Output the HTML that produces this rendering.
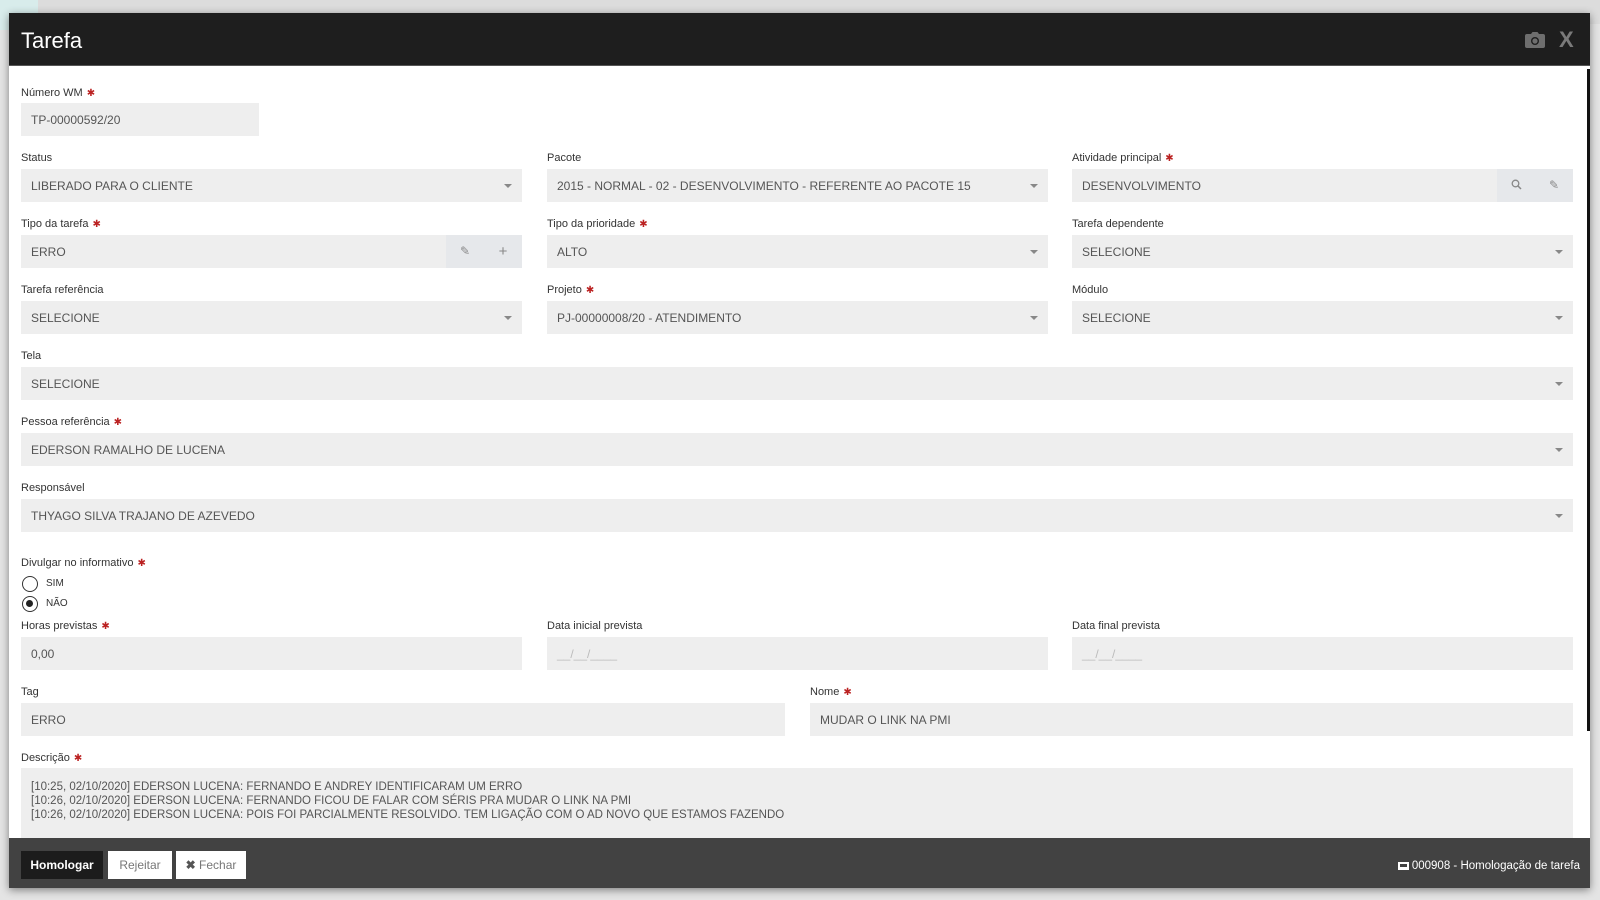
<!DOCTYPE html>
<html><head><meta charset="utf-8"><style>
*{box-sizing:border-box;margin:0;padding:0}
body{width:1600px;height:900px;overflow:hidden;background:#e4e4e4;font-family:"Liberation Sans",sans-serif;position:relative}
.bgtop{position:absolute;left:0;top:0;width:1600px;height:24px;background:#dcdcdc}
.teal{position:absolute;left:0;top:0;width:38px;height:30px;background:#d8eceb}
.modal{position:absolute;left:9px;top:13px;width:1581px;height:875px;background:#fff;box-shadow:0 2px 8px rgba(0,0,0,.45)}
.hdr{position:absolute;left:0;top:0;width:1581px;height:53px;background:#1e1e1e;border-bottom:1px solid #555}
.hdr h1{position:absolute;left:12px;top:15px;color:#fff;font-size:22px;font-weight:normal}
.lbl{position:absolute;font-size:11px;color:#333;font-weight:normal;margin-top:2px}
.lbl i{color:#b22;font-style:normal;font-size:10px;margin-left:4px}
.in{position:absolute;height:33px;background:#eeeeee;font-size:12px;color:#555;padding:10px 10px;white-space:nowrap}
.in.sel:after{content:"";position:absolute;right:10px;top:15px;border:4px solid transparent;border-top:4px solid #888;border-bottom:0}
.addon{position:absolute;top:0;height:33px;width:38px;background:#e6e8eb;color:#888;text-align:center;line-height:33px;font-size:12px}
.ftr{position:absolute;left:0;top:825px;width:1581px;height:50px;background:#424242}
.btn{position:absolute;top:13px;height:28px;font-size:12px;line-height:28px;text-align:center}
.radio{position:absolute;width:16px;height:16px;border:1.5px solid #333;border-radius:50%}
.scroll{position:absolute;left:1578px;top:56px;width:3px;height:662px;background:#111}
</style></head><body>
<div class="bgtop"></div><div class="teal"></div>
<div class="modal">
<div class="hdr"><h1>Tarefa</h1>
<svg style="position:absolute;left:1516px;top:19px" width="20" height="16" viewBox="0 0 20 16"><path d="M6 2l1.5-2h5L14 2h4a2 2 0 0 1 2 2v10a2 2 0 0 1-2 2H2a2 2 0 0 1-2-2V4a2 2 0 0 1 2-2z" fill="#6e6e6e"/><circle cx="10" cy="9" r="4" fill="#1e1e1e"/><circle cx="10" cy="9" r="2.6" fill="#6e6e6e"/></svg>
<div style="position:absolute;left:1550px;top:14px;color:#7a7a7a;font-size:22px;font-weight:bold">X</div>
</div>
<div class="scroll"></div>

<div class="lbl" style="left:12px;top:72px">Número WM<i>✱</i></div>
<div class="in" style="left:12px;top:90px;width:238px">TP-00000592/20</div>

<div class="lbl" style="left:12px;top:137px">Status</div>
<div class="in sel" style="left:12px;top:156px;width:501px">LIBERADO PARA O CLIENTE</div>
<div class="lbl" style="left:538px;top:137px">Pacote</div>
<div class="in sel" style="left:538px;top:156px;width:501px">2015 - NORMAL - 02 - DESENVOLVIMENTO - REFERENTE AO PACOTE 15</div>
<div class="lbl" style="left:1063px;top:137px">Atividade principal<i>✱</i></div>
<div class="in" style="left:1063px;top:156px;width:501px">DESENVOLVIMENTO
<div class="addon" style="right:38px"><svg width="11" height="11" viewBox="0 0 11 11" style="vertical-align:-1px"><circle cx="4.5" cy="4.5" r="3.3" fill="none" stroke="#888" stroke-width="1.3"/><path d="M7 7l3 3" stroke="#888" stroke-width="1.5"/></svg></div><div class="addon" style="right:0">&#9998;</div></div>

<div class="lbl" style="left:12px;top:203px">Tipo da tarefa<i>✱</i></div>
<div class="in" style="left:12px;top:222px;width:501px">ERRO
<div class="addon" style="right:38px">&#9998;</div><div class="addon" style="right:0;font-size:15px">+</div></div>
<div class="lbl" style="left:538px;top:203px">Tipo da prioridade<i>✱</i></div>
<div class="in sel" style="left:538px;top:222px;width:501px">ALTO</div>
<div class="lbl" style="left:1063px;top:203px">Tarefa dependente</div>
<div class="in sel" style="left:1063px;top:222px;width:501px">SELECIONE</div>

<div class="lbl" style="left:12px;top:269px">Tarefa referência</div>
<div class="in sel" style="left:12px;top:288px;width:501px">SELECIONE</div>
<div class="lbl" style="left:538px;top:269px">Projeto<i>✱</i></div>
<div class="in sel" style="left:538px;top:288px;width:501px">PJ-00000008/20 - ATENDIMENTO</div>
<div class="lbl" style="left:1063px;top:269px">Módulo</div>
<div class="in sel" style="left:1063px;top:288px;width:501px">SELECIONE</div>

<div class="lbl" style="left:12px;top:335px">Tela</div>
<div class="in sel" style="left:12px;top:354px;width:1552px">SELECIONE</div>
<div class="lbl" style="left:12px;top:401px">Pessoa referência<i>✱</i></div>
<div class="in sel" style="left:12px;top:420px;width:1552px">EDERSON RAMALHO DE LUCENA</div>
<div class="lbl" style="left:12px;top:467px">Responsável</div>
<div class="in sel" style="left:12px;top:486px;width:1552px">THYAGO SILVA TRAJANO DE AZEVEDO</div>

<div class="lbl" style="left:12px;top:542px">Divulgar no informativo<i>✱</i></div>
<div class="radio" style="left:13px;top:563px"></div>
<div style="position:absolute;left:37px;top:565px;font-size:10px;color:#333">SIM</div>
<div class="radio" style="left:13px;top:583px"><div style="position:absolute;left:3px;top:3px;width:7px;height:7px;border-radius:50%;background:#222"></div></div>
<div style="position:absolute;left:37px;top:585px;font-size:10px;color:#333">NÃO</div>

<div class="lbl" style="left:12px;top:605px">Horas previstas<i>✱</i></div>
<div class="in" style="left:12px;top:624px;width:501px">0,00</div>
<div class="lbl" style="left:538px;top:605px">Data inicial prevista</div>
<div class="in" style="left:538px;top:624px;width:501px;color:#bbb">__/__/____</div>
<div class="lbl" style="left:1063px;top:605px">Data final prevista</div>
<div class="in" style="left:1063px;top:624px;width:501px;color:#bbb">__/__/____</div>

<div class="lbl" style="left:12px;top:671px">Tag</div>
<div class="in" style="left:12px;top:690px;width:764px">ERRO</div>
<div class="lbl" style="left:801px;top:671px">Nome<i>✱</i></div>
<div class="in" style="left:801px;top:690px;width:763px">MUDAR O LINK NA PMI</div>

<div class="lbl" style="left:12px;top:737px">Descrição<i>✱</i></div>
<div class="in" style="left:12px;top:755px;width:1552px;height:70px;padding:12px 10px;line-height:14px;font-size:11.5px">[10:25, 02/10/2020] EDERSON LUCENA: FERNANDO E ANDREY IDENTIFICARAM UM ERRO<br>[10:26, 02/10/2020] EDERSON LUCENA: FERNANDO FICOU DE FALAR COM SÉRIS PRA MUDAR O LINK NA PMI<br>[10:26, 02/10/2020] EDERSON LUCENA: POIS FOI PARCIALMENTE RESOLVIDO. TEM LIGAÇÃO COM O AD NOVO QUE ESTAMOS FAZENDO</div>

<div class="ftr">
<div class="btn" style="left:12px;width:82px;background:#1c1c1c;color:#fff;font-weight:600">Homologar</div>
<div class="btn" style="left:99px;width:64px;background:#fff;color:#777">Rejeitar</div>
<div class="btn" style="left:167px;width:70px;background:#fff;color:#777"><b style="color:#555">✖</b> Fechar</div>
<div style="position:absolute;right:10px;top:22px;color:#fff;font-size:11.5px"><span style="display:inline-block;width:11px;height:8px;border:2px solid #fff;border-bottom-width:3px;vertical-align:-1px;margin-right:3px"></span>000908 - Homologação de tarefa</div>
</div>
</div>
</body></html>
